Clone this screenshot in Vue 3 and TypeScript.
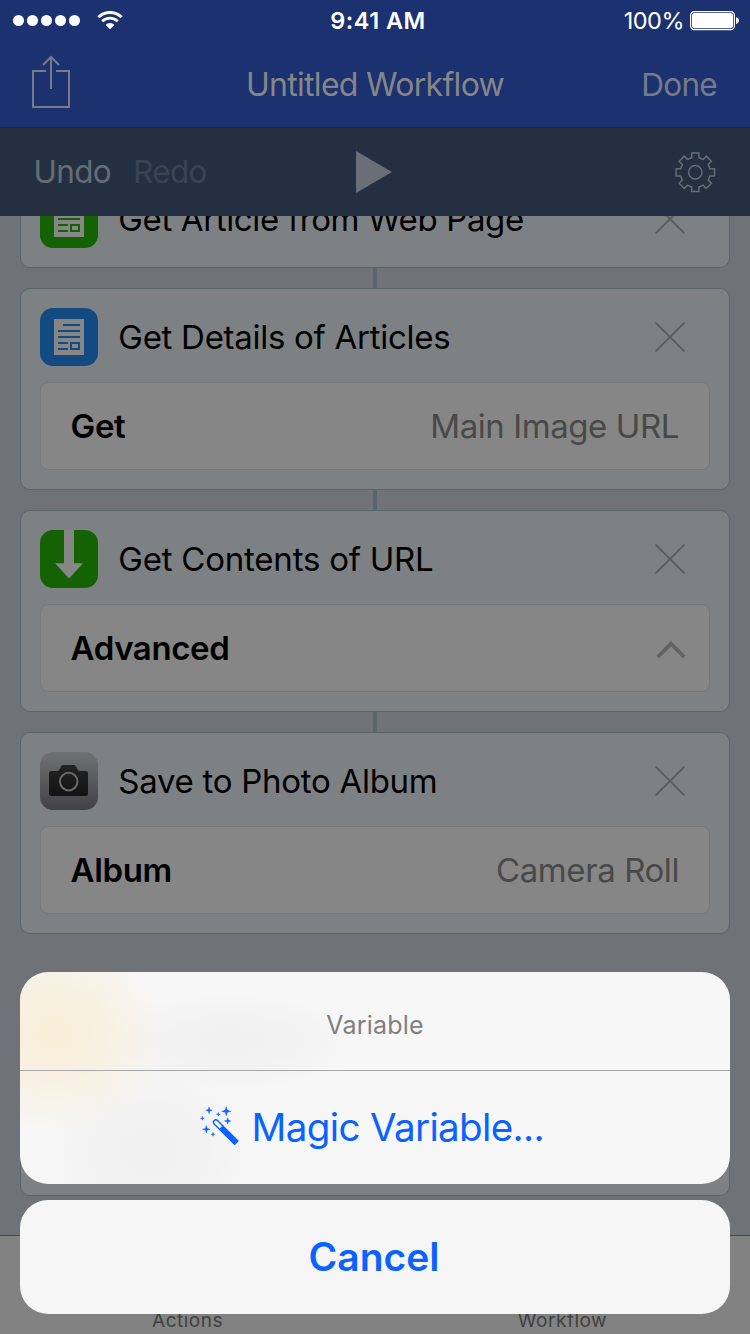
<script setup lang="ts">
interface Action {
  id: number
  title: string
  kind: 'page-green' | 'page-blue' | 'download' | 'camera'
  titleClass: string
  label?: string
  value?: string
  expandable?: boolean
}

const actions: Action[] = [
  { id: 1, title: 'Get Article from Web Page', kind: 'page-green', titleClass: 't1' },
  { id: 2, title: 'Get Details of Articles', kind: 'page-blue', titleClass: 't2', label: 'Get', value: 'Main Image URL' },
  { id: 3, title: 'Get Contents of URL', kind: 'download', titleClass: 't3', label: 'Advanced', expandable: true },
  { id: 4, title: 'Save to Photo Album', kind: 'camera', titleClass: 't4', label: 'Album', value: 'Camera Roll' },
]

// Eight square teeth joined by arcs of the gear body.
function gearPath(teeth: number, body: number, tip: number, half: number): string {
  const points: string[] = []
  for (let i = 0; i < teeth; i++) {
    const a = (i * 2 * Math.PI) / teeth
    const at = (x: number, y: number) =>
      `${(x * Math.cos(a) - y * Math.sin(a)).toFixed(2)} ${(x * Math.sin(a) + y * Math.cos(a)).toFixed(2)}`
    points.push(
      `${i === 0 ? 'M' : `A${body} ${body} 0 0 1 `}${at(-half, -body)}`,
      `L${at(-half, -tip)}`,
      `L${at(half, -tip)}`,
      `L${at(half, -body)}`,
    )
  }
  return `${points.join('')}A${body} ${body} 0 0 1 ${-half} ${-body}Z`
}
const gear = gearPath(8, 14.6, 19.2, 3.6)

interface Star { x: number; y: number; r: number }
const stars: Star[] = [
  { x: 26.3, y: 6.3, r: 4.6 },
  { x: 9, y: 5.3, r: 3.3 },
  { x: 6.3, y: 24.3, r: 3.7 },
  { x: 27.7, y: 16, r: 3.2 },
  { x: 2.3, y: 13.3, r: 1.9 },
  { x: 18.3, y: 9.3, r: 1.9 },
  { x: 13, y: 29.3, r: 1.9 },
]
function starPath({ x, y, r }: Star): string {
  const k = r * 0.22
  return `M${x} ${y - r}L${x + k} ${y - k}L${x + r} ${y}L${x + k} ${y + k}L${x} ${y + r}L${x - k} ${y + k}L${x - r} ${y}L${x - k} ${y - k}Z`
}
</script>

<template>
  <main class="screen">
    <header class="top">
      <div class="status">
        <div class="signal">
          <i v-for="n in 5" :key="n" class="dot"></i>
          <svg class="wifi" width="26" height="19" viewBox="0 0 26 19">
            <path d="M1.4 6.2A16.6 16.6 0 0 1 24.6 6.2" fill="none" stroke="#fff" stroke-width="3" />
            <path d="M5.2 10.3A11 11 0 0 1 20.8 10.3" fill="none" stroke="#fff" stroke-width="2.8" />
            <path d="M8.6 13.9A6.2 6.2 0 0 1 17.4 13.9L13 18.3Z" fill="#fff" />
          </svg>
        </div>
        <span class="time">9:41 AM</span>
        <div class="power">
          <span class="percent">100%</span>
          <svg width="50" height="20" viewBox="0 0 50 20">
            <rect x="0.6" y="0.6" width="43.8" height="18" rx="3.6" fill="none" stroke="#fff" stroke-width="1.2" />
            <rect x="2" y="2" width="41" height="15.2" rx="2.4" fill="#fff" />
            <path d="M46 6.2Q49 7 49 9.6T46 13Z" fill="#fff" />
          </svg>
        </div>
      </div>
      <div class="nav">
        <svg class="share" width="40" height="54" viewBox="0 0 40 54">
          <g fill="none" stroke="#757b88" stroke-width="2">
            <path d="M14 16H1V52H37V16H24" />
            <path d="M19 34V2M11 10L19 2L27 10" />
          </g>
        </svg>
        <h1 class="title">Untitled Workflow</h1>
        <span class="done">Done</span>
      </div>
    </header>

    <div class="toolbar">
      <div class="history">
        <span class="undo">Undo</span>
        <span class="redo">Redo</span>
      </div>
      <svg class="play" width="36" height="42" viewBox="0 0 36 42"><path d="M0 0L36 21L0 42Z" fill="#6a6f77" /></svg>
      <svg class="gear" width="42" height="42" viewBox="-21.3 -21.3 42 42">
        <g fill="none" stroke="#666c75" stroke-width="1.5">
          <path :d="gear" />
          <circle r="6.7" />
        </g>
      </svg>
    </div>

    <section class="canvas">
      <article v-for="a in actions" :key="a.id" class="card">
        <div class="head">
          <svg class="icon" width="58" height="58" viewBox="0 0 58 58">
            <defs>
              <linearGradient id="steel" x1="0" y1="0" x2="0" y2="1">
                <stop offset="0" stop-color="#707172" />
                <stop offset="1" stop-color="#424246" />
              </linearGradient>
              <linearGradient id="body" x1="0" y1="0" x2="0" y2="1">
                <stop offset="0" stop-color="#232323" />
                <stop offset="1" stop-color="#131313" />
              </linearGradient>
            </defs>
            <template v-if="a.kind === 'page-green' || a.kind === 'page-blue'">
              <rect width="58" height="58" rx="13" :class="a.kind" />
              <rect x="14" y="11" width="30" height="36" fill="#868686" />
              <g :class="a.kind">
                <rect x="23" y="16" width="17" height="2" />
                <rect x="18" y="22" width="22" height="2" />
                <rect x="18" y="28" width="22" height="2" />
                <rect x="18" y="34" width="10" height="2" />
                <rect x="18" y="40" width="10" height="2" />
                <path fill-rule="evenodd" d="M30 34H40V42H30ZM32 36V40H38V36Z" />
              </g>
            </template>
            <template v-else-if="a.kind === 'download'">
              <rect width="58" height="58" rx="13" fill="#146204" />
              <path d="M24 0H34V33.3H43L29 48.5L15 33.3H24Z" fill="#868686" />
            </template>
            <template v-else>
              <rect width="58" height="58" rx="13" fill="url(#steel)" />
              <path d="M11 19H17.5Q18.6 19 19.2 17.8L21 14.4Q21.7 13 23 13H34Q35.3 13 36 14.4L37.8 17.8Q38.4 19 39.5 19H46Q48 19 48 21V42Q48 44 46 44H11Q9 44 9 42V21Q9 19 11 19Z" fill="url(#body)" />
              <circle cx="28.7" cy="29.6" r="8.8" fill="none" stroke="#6a6a6a" stroke-width="2" />
            </template>
          </svg>
          <h2 class="name" :class="a.titleClass">{{ a.title }}</h2>
          <svg class="close" width="32" height="32" viewBox="0 0 32 32">
            <path d="M1.6 1.6L30.4 30.4M30.4 1.6L1.6 30.4" stroke="#5b5c5e" stroke-width="1.9" />
          </svg>
        </div>
        <div v-if="a.label" class="field">
          <span class="label">{{ a.label }}</span>
          <span v-if="a.value" class="value">{{ a.value }}</span>
          <svg v-if="a.expandable" class="chevron" width="30" height="18" viewBox="0 0 30 18">
            <path d="M1.8 16L15 2.6L28.2 16" fill="none" stroke="#616264" stroke-width="3.7" />
          </svg>
        </div>
      </article>
      <article class="card trailing"></article>
    </section>

    <footer class="tabs">
      <span class="tab actions">Actions</span>
      <span class="tab workflow">Workflow</span>
    </footer>

    <div class="sheet">
      <div class="group">
        <div class="caption"><span>Variable</span></div>
        <div class="option">
          <svg class="wand" width="42" height="42" viewBox="0 0 42 42" fill="#0b63ff">
            <path v-for="(s, i) in stars" :key="i" :d="starPath(s)" stroke="#0b63ff" stroke-width="0.5" />
            <g transform="translate(36.8 38.2) rotate(45)">
              <rect x="-22.5" y="-3.1" width="22.5" height="6.2" rx="0.8" />
              <path d="M-21 -2.4H-29.6A2.4 2.4 0 0 0 -29.6 2.4H-21" fill="none" stroke="#0b63ff" stroke-width="1.4" />
            </g>
          </svg>
          <span class="magic">Magic Variable...</span>
        </div>
      </div>
      <div class="group cancel"><span>Cancel</span></div>
    </div>
  </main>
</template>

<style>
body {
  margin: 0;
}
</style>

<style scoped>
.screen {
  position: relative;
  display: flex;
  flex-direction: column;
  width: 750px;
  height: 1334px;
  overflow: hidden;
  background: #6f7277;
  font-family: Inter, "Liberation Sans", sans-serif;
  line-height: 1;
  white-space: nowrap;
}
h1,
h2 {
  margin: 0;
  font-weight: 400;
}
svg {
  display: block;
  flex: none;
}
.top {
  flex: none;
  box-sizing: border-box;
  height: 128px;
  background: #1b3170;
  border-bottom: 1px solid #172750;
}
.status {
  display: grid;
  grid-template-columns: 1fr auto 1fr;
  align-items: center;
  height: 41px;
  padding: 0 10px 0 13px;
  color: #fff;
}
.signal {
  display: flex;
  align-items: center;
  gap: 3px;
}
.dot {
  width: 11px;
  height: 11px;
  border-radius: 50%;
  background: #fff;
}
.wifi {
  margin-left: 14px;
}
.time {
  padding-left: 3px;
  font-size: 23.5px;
  font-weight: 600;
  letter-spacing: 0.5px;
}
.power {
  display: flex;
  justify-content: flex-end;
  align-items: center;
  gap: 6px;
}
.percent {
  font-size: 23.5px;
  letter-spacing: -0.5px;
}
.nav {
  display: grid;
  grid-template-columns: 1fr auto 1fr;
  align-items: center;
  height: 86px;
  padding: 0 33px 0 32px;
}
.share {
  margin-top: -4px;
}
.title {
  padding: 2px 0 0 1px;
  font-size: 32px;
  letter-spacing: -0.7px;
  color: #868686;
}
.done {
  justify-self: end;
  padding-top: 2px;
  font-size: 31.5px;
  letter-spacing: -0.7px;
  color: #757b88;
}
.toolbar {
  flex: none;
  display: grid;
  grid-template-columns: 1fr auto 1fr;
  align-items: center;
  height: 88px;
  padding: 0 34px 0 32px;
  background: #243042;
  font-size: 31.5px;
  letter-spacing: -0.65px;
}
.history {
  display: flex;
  gap: 22px;
  padding-left: 1.4px;
}
.undo {
  color: #666c75;
}
.redo {
  color: #3a4353;
}
.gear {
  justify-self: end;
}
.canvas {
  flex: none;
  height: 1019px;
  overflow: hidden;
  display: flex;
  flex-direction: column;
  gap: 20px;
  padding: 0 20px;
}
.card {
  position: relative;
  flex: none;
  box-sizing: border-box;
  padding: 19px;
  border: 1px solid #59676d;
  border-radius: 10px;
  background: #7d8183;
}
.card:first-child {
  margin-top: -46px;
  height: 98px;
}
.card:not(:nth-last-child(-n + 2))::after {
  content: "";
  position: absolute;
  left: 352px;
  top: calc(100% + 1px);
  width: 4px;
  height: 20px;
  background: #59676d;
}
.trailing {
  margin-top: 40px;
  height: 202px;
}
.head {
  display: flex;
  align-items: center;
  height: 58px;
  padding-right: 24px;
}
.page-green {
  fill: #146204;
}
.page-blue {
  fill: #144a82;
}
.name {
  flex: 1;
  margin-left: 20.3px;
  font-size: 33px;
  color: #000;
  letter-spacing: -0.28px;
}
.t1 {
  letter-spacing: -0.36px;
}
.t3 {
  letter-spacing: -0.22px;
}
.field {
  display: flex;
  align-items: center;
  justify-content: space-between;
  box-sizing: border-box;
  height: 88px;
  margin-top: 16px;
  padding: 0 30px 0 29.6px;
  border: 1px solid #75797c;
  border-radius: 8px;
  background: #868686;
  font-size: 33px;
}
.label {
  font-weight: 600;
  color: #000;
  letter-spacing: -0.4px;
}
.value {
  color: #494949;
  letter-spacing: -0.42px;
}
.chevron {
  margin: 3px -7px 0 0;
}
.tabs {
  flex: none;
  display: grid;
  grid-template-columns: 1fr 1fr;
  justify-items: center;
  align-items: end;
  box-sizing: border-box;
  height: 99px;
  padding-bottom: 4px;
  border-top: 1px solid #47494b;
  background: #828282;
  font-size: 19px;
  color: #414141;
}
.tab {
  letter-spacing: 0.5px;
}
.sheet {
  position: absolute;
  left: 20px;
  right: 20px;
  bottom: 20px;
  display: flex;
  flex-direction: column;
  gap: 16px;
  color: #0b63ff;
}
.group {
  border-radius: 28px;
  overflow: hidden;
  background:
    radial-gradient(ellipse 110px 98px at 34px 62px, rgba(248, 238, 214, 0.95), rgba(248, 238, 216, 0.65) 50%, rgba(248, 239, 222, 0) 100%),
    radial-gradient(ellipse 130px 50px at 210px 70px, rgba(240, 240, 240, 0.9), rgba(240, 240, 240, 0.7) 50%, rgba(240, 240, 240, 0)),
    radial-gradient(ellipse 110px 90px at 130px 180px, rgba(240, 240, 240, 0.9), rgba(240, 240, 240, 0.7) 50%, rgba(240, 240, 240, 0)),
    #f7f7f7;
}
.caption {
  display: flex;
  align-items: center;
  justify-content: center;
  box-sizing: border-box;
  height: 99px;
  padding-top: 8px;
  border-bottom: 1px solid #a6a7a8;
  font-size: 25px;
  letter-spacing: 0.2px;
  color: #808080;
}
.option {
  display: flex;
  align-items: center;
  height: 113px;
  padding-left: 180px;
  font-size: 38.6px;
}
.wand {
  margin-top: -4px;
}
.magic {
  margin-left: 9.6px;
  letter-spacing: -0.67px;
}
.cancel {
  display: flex;
  align-items: center;
  justify-content: center;
  box-sizing: border-box;
  height: 114px;
  padding: 0 2px 2px 0;
  background: #f6f6f6;
  font-size: 39px;
  font-weight: 600;
}
</style>
